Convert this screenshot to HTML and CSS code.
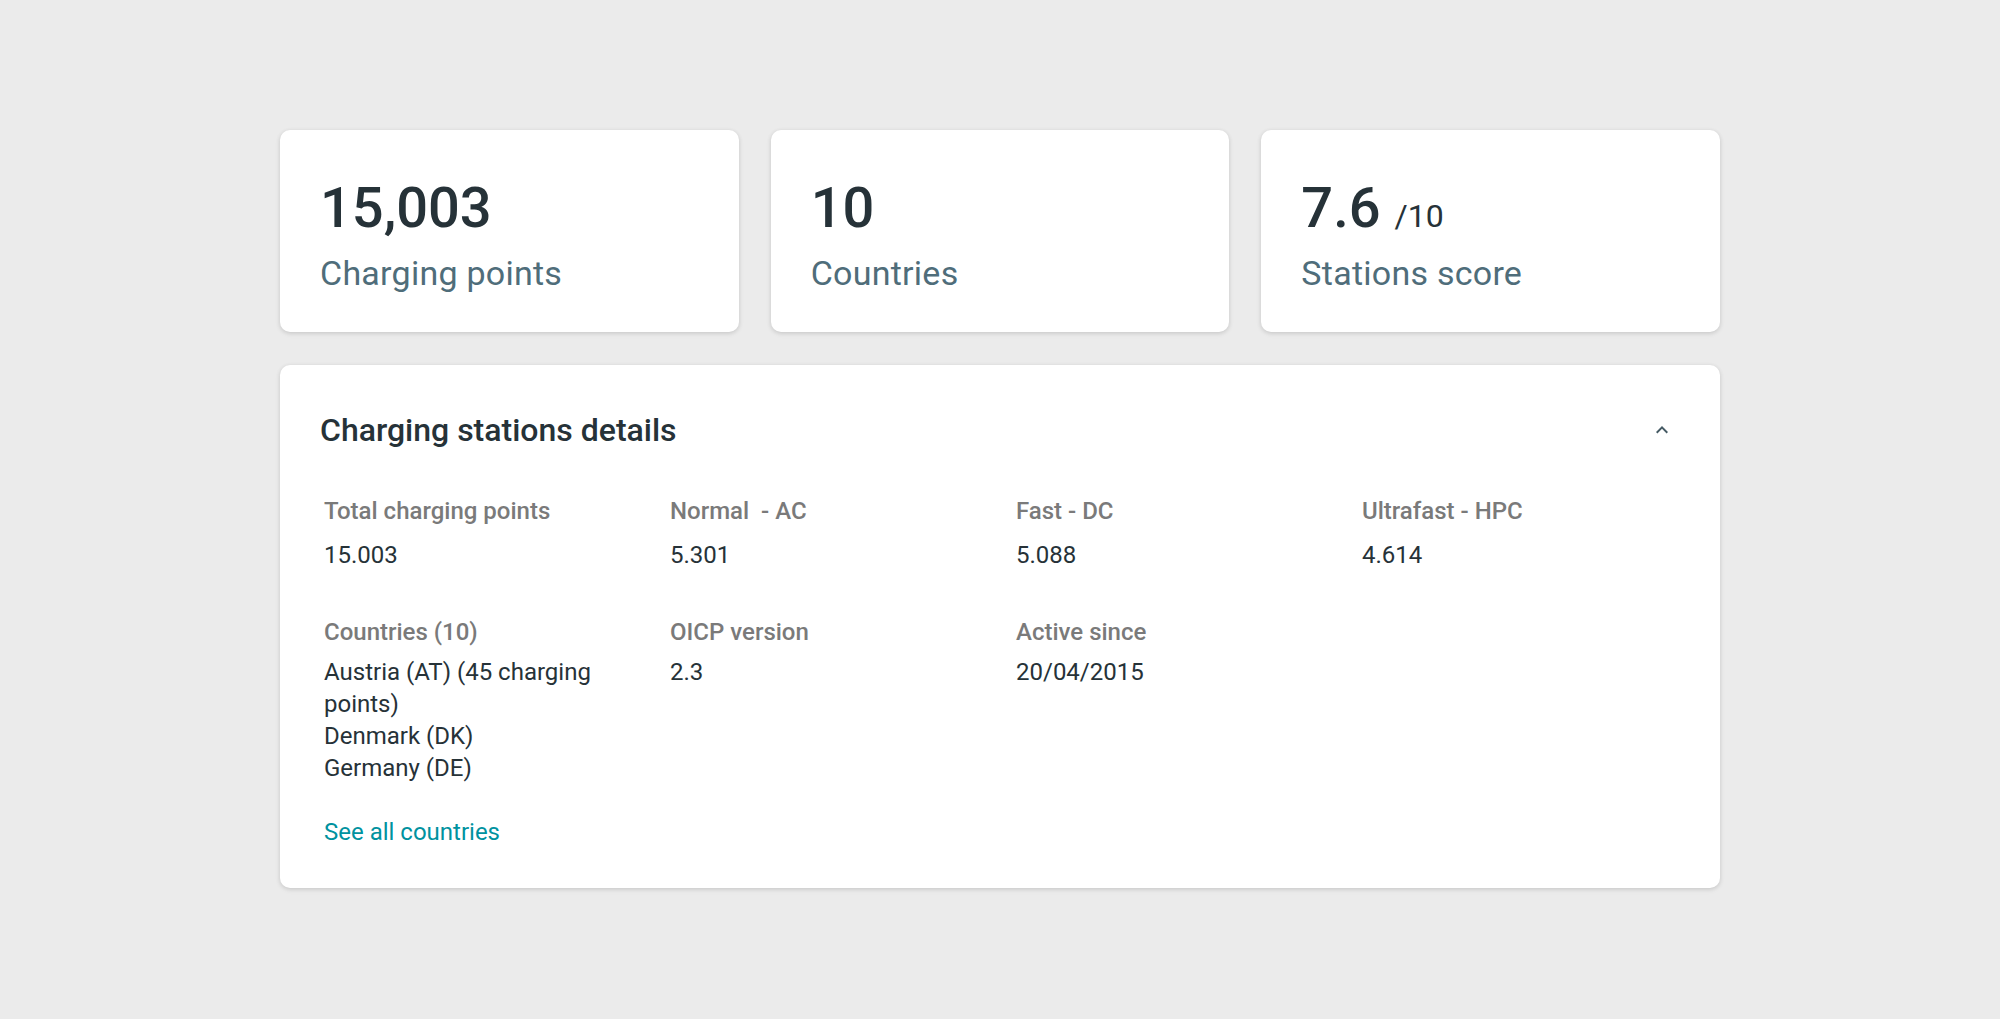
FILE: index.html
```html
<!DOCTYPE html>
<html lang="en">
<head>
<meta charset="utf-8">
<title>Charging stations</title>
<link rel="stylesheet" href="styles.css">
</head>
<body>
<main class="page">
  <section class="stats">
    <div class="card stat">
      <div class="stat-value">15,003</div>
      <div class="stat-label">Charging points</div>
    </div>
    <div class="card stat">
      <div class="stat-value">10</div>
      <div class="stat-label">Countries</div>
    </div>
    <div class="card stat">
      <div class="stat-value">7.6 <span class="stat-sub">/10</span></div>
      <div class="stat-label">Stations score</div>
    </div>
  </section>

  <section class="card details">
    <header class="details-head">
      <h2 class="details-title">Charging stations details</h2>
      <svg class="chevron" width="24" height="24" viewBox="0 0 24 24"><path d="M12 8l-6 6 1.41 1.41L12 10.83l4.59 4.58L18 14z" fill="#455a64"/></svg>
    </header>
    <div class="grid">
      <div class="item">
        <div class="label">Total charging points</div>
        <div class="value">15.003</div>
      </div>
      <div class="item">
        <div class="label">Normal &nbsp;- AC</div>
        <div class="value">5.301</div>
      </div>
      <div class="item">
        <div class="label">Fast - DC</div>
        <div class="value">5.088</div>
      </div>
      <div class="item">
        <div class="label">Ultrafast - HPC</div>
        <div class="value">4.614</div>
      </div>
      <div class="item row2">
        <div class="label">Countries (10)</div>
        <div class="value">Austria (AT) (45 charging points)<br>Denmark (DK)<br>Germany (DE)</div>
        <a class="link" href="#">See all countries</a>
      </div>
      <div class="item row2">
        <div class="label">OICP version</div>
        <div class="value">2.3</div>
      </div>
      <div class="item row2">
        <div class="label">Active since</div>
        <div class="value">20/04/2015</div>
      </div>
    </div>
  </section>
</main>
</body>
</html>
```

FILE: styles.css
```css
* { box-sizing: border-box; }
html, body { margin: 0; padding: 0; }
body {
  background: #ebebeb;
  font-family: Roboto, "Liberation Sans", Arial, sans-serif;
  color: #263238;
  width: 2000px;
  height: 1019px;
}
.page {
  width: 1440px;
  margin: 0 auto;
  padding-top: 130px;
}
.card {
  background: #ffffff;
  border-radius: 10px;
  box-shadow: 0 1px 4px rgba(0, 0, 0, 0.12), 0 2px 6px rgba(0, 0, 0, 0.05);
}
.stats {
  display: grid;
  grid-template-columns: repeat(3, 1fr);
  gap: 32px;
}
.stat {
  height: 202px;
  padding: 44px 40px 0;
}
.stat-value {
  font-size: 56px;
  font-weight: 500;
  line-height: 68px;
  color: #263238;
}
.stat-sub {
  font-size: 32px;
  font-weight: 400;
  line-height: 1;
}
.stat-label {
  margin-top: 11px;
  font-size: 34px;
  line-height: 40px;
  letter-spacing: 0.25px;
  color: #4f6d7a;
}
.details {
  margin-top: 33px;
  padding: 39px 40px 40px;
}
.details-head {
  display: flex;
  align-items: center;
  justify-content: space-between;
  height: 52px;
}
.details-title {
  margin: 0;
  font-size: 32px;
  font-weight: 500;
  line-height: 40px;
  color: #263238;
}
.chevron { margin-right: 6px; }
.grid {
  display: grid;
  grid-template-columns: repeat(4, 1fr);
  column-gap: 32px;
  padding: 39px 4px 0;
}
.item { min-width: 0; }
.label {
  font-size: 24px;
  font-weight: 500;
  line-height: 32px;
  color: #7a7a7a;
}
.value {
  margin-top: 12px;
  font-size: 24px;
  line-height: 32px;
  color: #263238;
}
.row2 { margin-top: 45px; }
.row2 .value { margin-top: 8px; }
.link {
  display: block;
  margin-top: 32px;
  font-size: 24px;
  line-height: 32px;
  color: #00929f;
  text-decoration: none;
}
```
